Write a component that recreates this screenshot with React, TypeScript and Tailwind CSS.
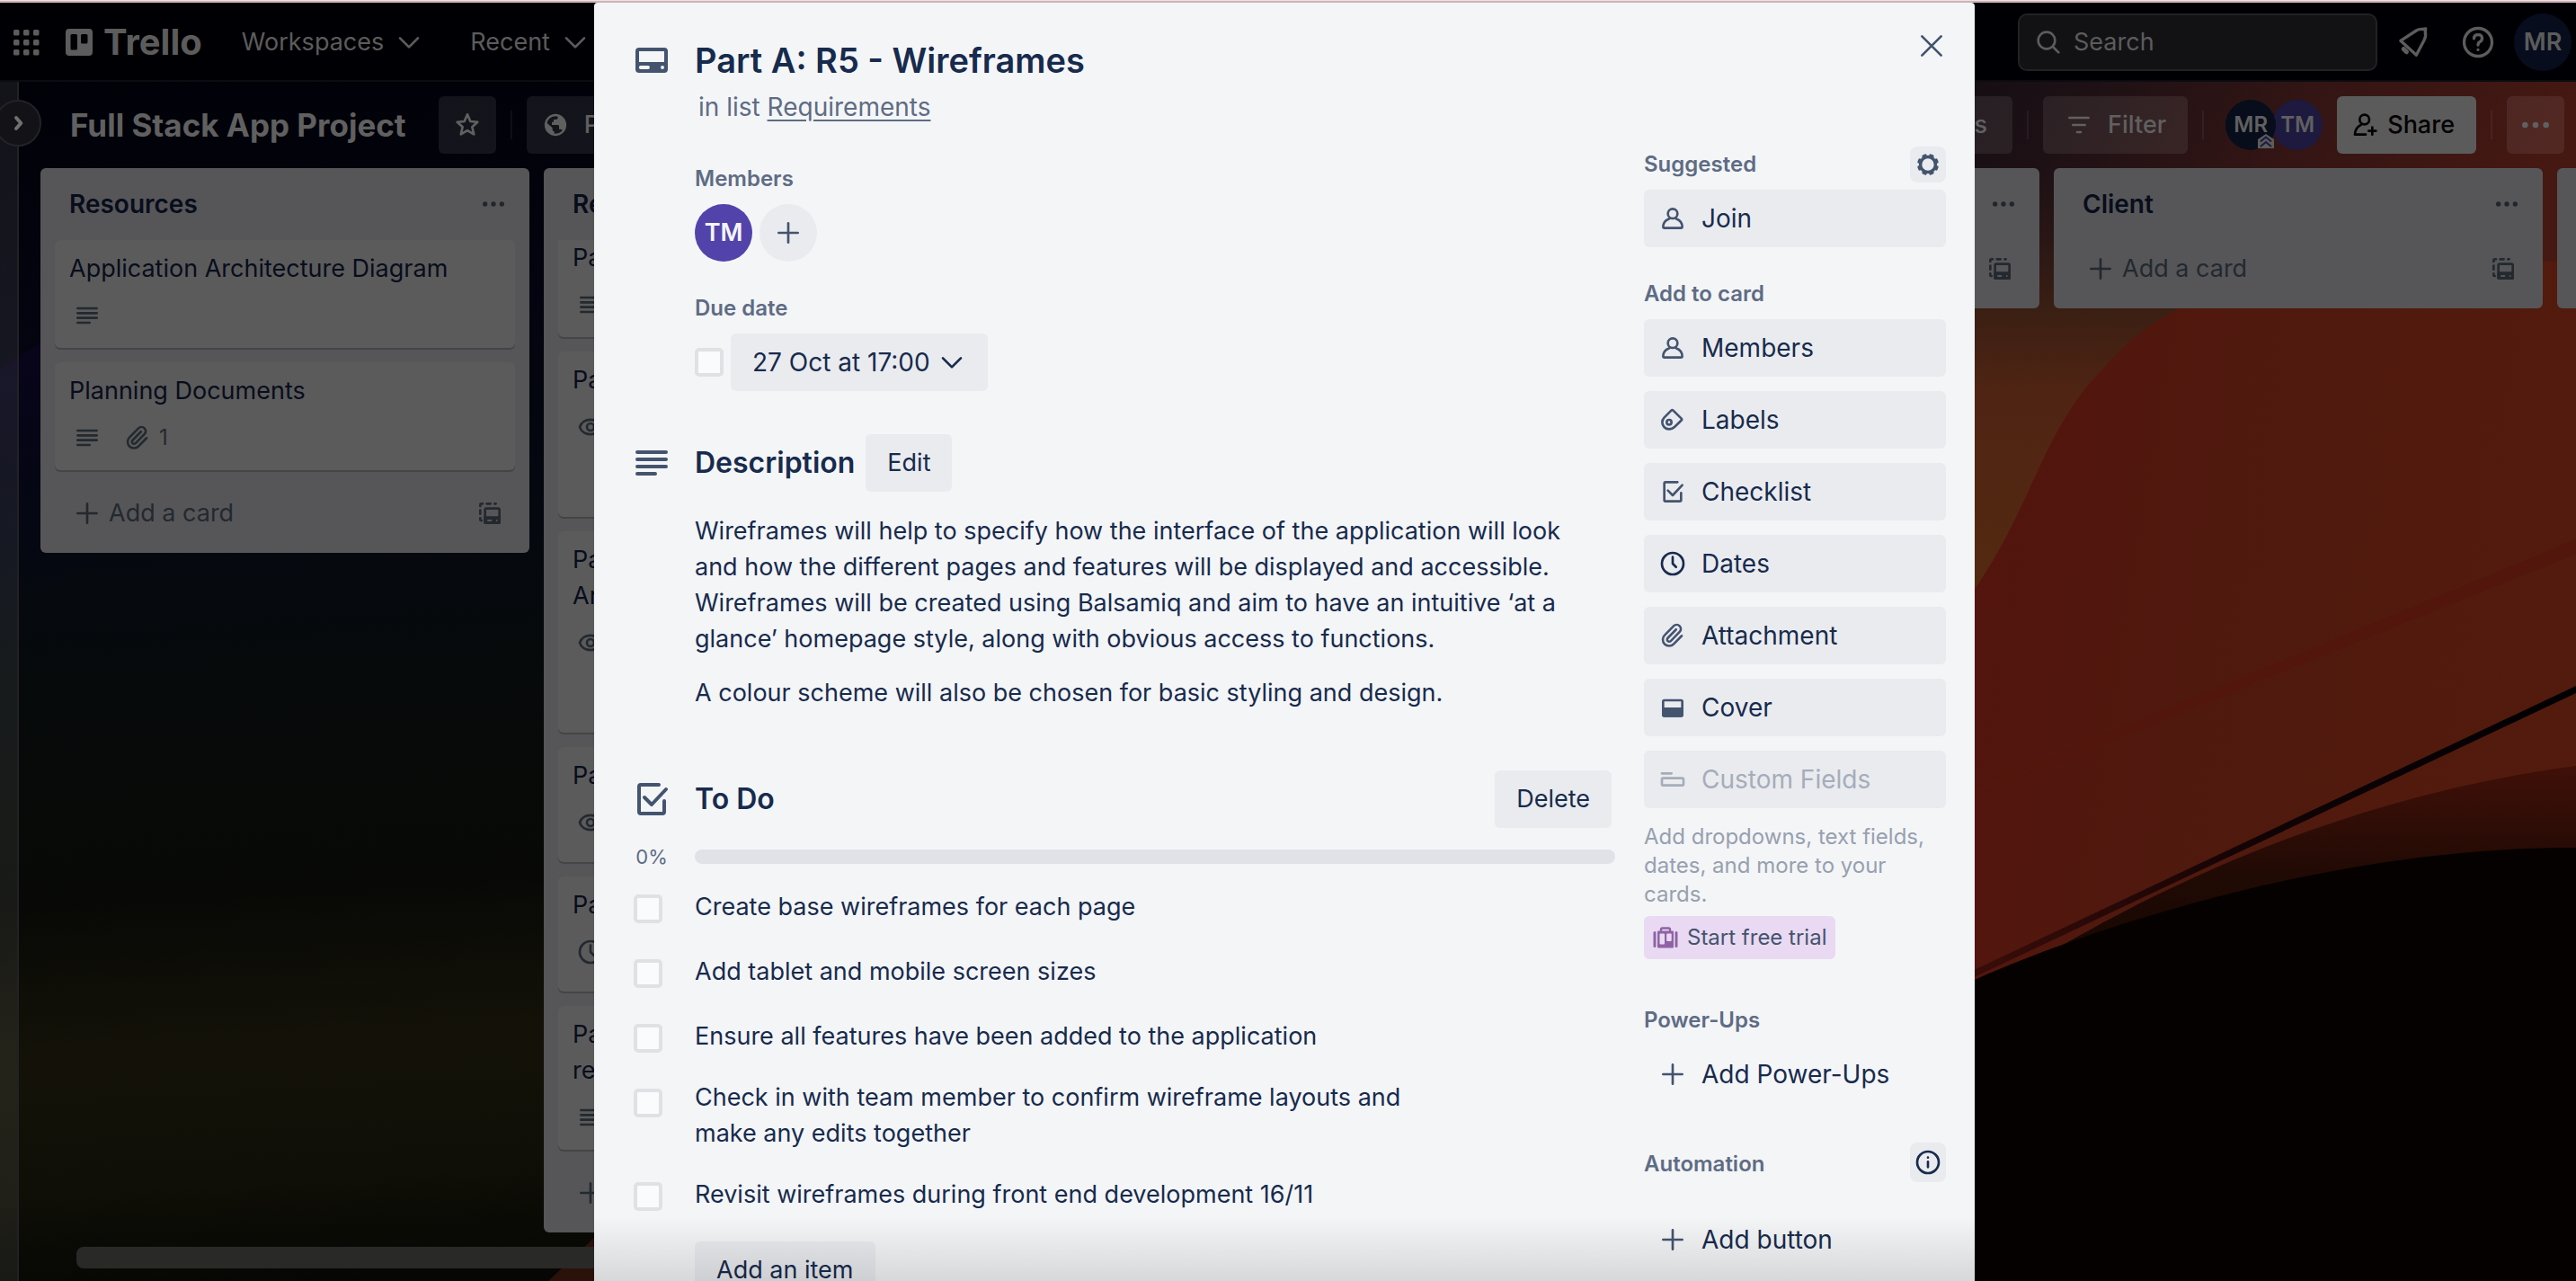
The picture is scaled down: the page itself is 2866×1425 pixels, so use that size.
import { useState } from "react";
import type { ReactNode } from "react";

/* ---------- icons (24-unit grid) ---------- */

function Icon({ className, children, w = 2 }: { className?: string; children: ReactNode; w?: number }) {
  return (
    <svg
      viewBox="0 0 24 24"
      className={className ?? "size-8 shrink-0"}
      fill="none"
      stroke="currentColor"
      strokeWidth={w}
      strokeLinecap="round"
      strokeLinejoin="round"
      aria-hidden="true"
    >
      {children}
    </svg>
  );
}

const CardIcon = () => (
  <Icon className="size-12 shrink-0">
    <rect x="4" y="6" width="16" height="12" rx="1" />
    <path d="M3.5 13H20.5V18Q20.5 18.5 20 18.5H4Q3.5 18.5 3.5 18Z" fill="currentColor" stroke="none" />
    <path d="M5.9 16H10" stroke="#f4f5f7" strokeWidth="1.9" />
    <path d="M18 16h.01" stroke="#f4f5f7" strokeWidth="1.9" />
  </Icon>
);

const LinesIcon = ({ className }: { className?: string }) => (
  <Icon className={className}>
    <path d="M4 6H20M4 10H20M4 14H20M4 18H14" />
  </Icon>
);

const CheckIcon = ({ className }: { className?: string }) => (
  <Icon className={className}>
    <path d="M16 4H6Q5 4 5 5V19Q5 20 6 20H18Q19 20 19 19V13" />
    <path d="M8 11L12 15L20 6.5" />
  </Icon>
);

const MemberIcon = () => (
  <Icon>
    <circle cx="12" cy="8" r="4" />
    <path d="M9 12.3C6 13.3 4 16 4 19.2Q4 20 4.8 20H19.2Q20 20 20 19.2C20 16 18 13.3 15 12.3" />
  </Icon>
);

const LabelIcon = () => (
  <Icon>
    <path d="M5 10L10.8 4.2Q11.6 3.4 12.4 4.2L19.3 11Q20 11.7 19.3 12.4L13.5 18C11 20.4 7.2 20.4 5 18.2C2.7 15.9 2.7 12.4 5 10Z" />
    <circle cx="9" cy="14" r="2" />
  </Icon>
);

const ClockIcon = ({ className }: { className?: string }) => (
  <Icon className={className}>
    <circle cx="12" cy="12" r="9" />
    <path d="M12 6.5V12L14.8 14.8" />
  </Icon>
);

const ClipIcon = () => (
  <Icon>
    <path
      transform="translate(1.2 1.2) scale(.88)"
      strokeWidth="2.2"
      d="m15.5 6.5-7.9 8.1a2 2 0 0 0 2.83 2.83l8.4-8.6a4 4 0 1 0-5.66-5.66l-8.37 8.56a6 6 0 1 0 8.48 8.48l7.6-7.7"
    />
  </Icon>
);

const CoverIcon = () => (
  <Icon>
    <rect x="4" y="6" width="16" height="13" rx="1" />
    <path d="M4 13H20V18Q20 19 19 19H5Q4 19 4 18Z" fill="currentColor" />
  </Icon>
);

const FieldsIcon = () => (
  <Icon>
    <path d="M3 7H11" />
    <rect x="3" y="11" width="18" height="6" rx="1" />
  </Icon>
);

const PlusIcon = () => (
  <Icon>
    <path d="M12 4V20M4 12H20" />
  </Icon>
);

const EyeIcon = () => (
  <Icon>
    <path d="M3 12C5.5 3.8 18.5 3.8 21 12C18.5 20.2 5.5 20.2 3 12Z" />
    <circle cx="12" cy="12" r="3" />
  </Icon>
);

const TemplateIcon = () => (
  <Icon>
    <rect x="8" y="8" width="12" height="12" rx="1" />
    <path d="M8 15.5H20V20H8Z" fill="currentColor" />
    <path d="M10.5 18H13M17.8 18h.01" stroke="#565658" strokeWidth="1.5" />
    <path d="M4 6V5Q4 4 5 4H6M9.5 4H12.5M16 4H17M4 9.5V12.5M4 16V17Q4 18 5 18" />
  </Icon>
);

const Dots = ({ className }: { className?: string }) => (
  <svg viewBox="0 0 24 24" className={className ?? "size-8"} fill="currentColor" aria-hidden="true">
    <circle cx="5" cy="12" r="2" />
    <circle cx="12" cy="12" r="2" />
    <circle cx="19" cy="12" r="2" />
  </svg>
);

const Chevron = () => (
  <Icon>
    <path d="M4.5 8.5L12 16L19.5 8.5" />
  </Icon>
);

const GearIcon = () => (
  <Icon>
    <circle cx="12" cy="12" r="6.3" strokeWidth="2.6" />
    <g fill="currentColor" stroke="none">
      {[22.5, 67.5, 112.5, 157.5, 202.5, 247.5, 292.5, 337.5].map((a) => (
        <rect key={a} x="10" y="3" width="4" height="3.4" rx="1" transform={`rotate(${a} 12 12)`} />
      ))}
    </g>
  </Icon>
);

const SuitcaseIcon = () => (
  <svg viewBox="0 0 28 24" className="h-6 w-7 shrink-0" aria-hidden="true">
    <path d="M9 5V3Q9 1.5 10.500 1.500H17.500Q19 1.500 19 3V5" fill="none" stroke="#8f64a6" strokeWidth="2.400" />
    <rect x="0.500" y="5" width="3" height="18" rx="1.500" fill="#8f64a6" />
    <rect x="24.500" y="5" width="3" height="18" rx="1.500" fill="#8f64a6" />
    <rect x="5" y="4.500" width="18" height="19" rx="1" fill="#8f64a6" />
    <rect x="7.500" y="7.500" width="5.500" height="12" rx="1" fill="#ead9f2" />
    <rect x="15.200" y="7.500" width="5.500" height="8.500" rx="1" fill="#ead9f2" />
  </svg>
);

/* ---------- wallpaper ---------- */

function Wallpaper() {
  return (
    <svg
      viewBox="0 0 2866 1425"
      preserveAspectRatio="none"
      className="absolute inset-0 size-full"
      aria-hidden="true"
    >
      <defs>
        <linearGradient id="left" x1="0" y1="0" x2="0.12" y2="1">
          <stop offset="0" stopColor="#000006" />
          <stop offset="0.25" stopColor="#03040f" />
          <stop offset="0.42" stopColor="#05080f" />
          <stop offset="0.55" stopColor="#070a0a" />
          <stop offset="0.7" stopColor="#080906" />
          <stop offset="0.82" stopColor="#141208" />
          <stop offset="0.92" stopColor="#0f0f07" />
          <stop offset="1" stopColor="#060604" />
        </linearGradient>
        <linearGradient id="purple" x1="0" y1="0" x2="0" y2="1">
          <stop offset="0" stopColor="#0a031c" />
          <stop offset="1" stopColor="#04081a" stopOpacity="0" />
        </linearGradient>
        <linearGradient id="top" x1="0" y1="0" x2="1" y2="0.3">
          <stop offset="0" stopColor="#0c0b12" />
          <stop offset="0.35" stopColor="#1e1115" />
          <stop offset="0.65" stopColor="#331514" />
          <stop offset="1" stopColor="#451812" />
        </linearGradient>
        <linearGradient id="brown" x1="0" y1="0" x2="0" y2="1">
          <stop offset="0" stopColor="#2a1a16" stopOpacity="0" />
          <stop offset="0.3" stopColor="#3a1f13" />
          <stop offset="0.5" stopColor="#502413" />
          <stop offset="1" stopColor="#532a10" />
        </linearGradient>
        <linearGradient id="red" x1="0" y1="0.3" x2="1" y2="0.5">
          <stop offset="0" stopColor="#53140d" />
          <stop offset="0.4" stopColor="#50190e" />
          <stop offset="1" stopColor="#521b0d" />
        </linearGradient>
        <linearGradient id="dune" x1="0" y1="0" x2="0" y2="1">
          <stop offset="0" stopColor="#3f1008" />
          <stop offset="0.6" stopColor="#200a04" />
          <stop offset="1" stopColor="#180703" />
        </linearGradient>
        <linearGradient id="ray" x1="0" y1="0" x2="1" y2="0">
          <stop offset="0" stopColor="#3a0d09" />
          <stop offset="0.5" stopColor="#100305" />
          <stop offset="1" stopColor="#000003" />
        </linearGradient>
      </defs>
      <rect width="2866" height="1425" fill="url(#left)" />
      <path d="M0 410Q30 390 50 380L110 350V620L0 680Z" fill="url(#purple)" />
      <path d="M610 1425L700 1340V1425Z" fill="#2a120a" />
      <rect x="2100" width="766" height="360" fill="url(#top)" />
      <rect x="2190" y="200" width="500" height="480" fill="url(#brown)" />
      <path
        d="M2190 665C2260 570 2270 480 2340 410C2375 370 2400 357 2424 343L2700 300Q2810 290 2866 290V1020L2190 1100Z"
        fill="url(#red)"
      />
      <path d="M2190 880L2866 600V616L2190 888Z" fill="#52160c" />
      <path d="M2280 1060C2450 960 2650 880 2866 852V1000Z" fill="url(#dune)" />
      <path d="M2190 1093C2330 1030 2600 942 2866 943V1425H2190Z" fill="#050100" />
      <path d="M2190 1082L2866 763V771L2190 1090Z" fill="url(#ray)" />
    </svg>
  );
}

/* ---------- board ---------- */

type BoardCard = { title: string; badge: "lines" | "lines-clip" | "eye" | "clock"; tall?: string };

const resources: BoardCard[] = [
  { title: "Application Architecture Diagram", badge: "lines" },
  { title: "Planning Documents", badge: "lines-clip" },
];

const requirements: BoardCard[] = [
  { title: "Part A: R1", badge: "lines", tall: "-mt-3 h-[120px]" },
  { title: "Part A: R2", badge: "eye", tall: "h-[184px]" },
  { title: "Part A: R3 -\nArchitecture", badge: "eye", tall: "h-[224px]" },
  { title: "Part A: R4", badge: "eye", tall: "h-32" },
  { title: "Part A: R5 - Wireframes", badge: "clock", tall: "h-32" },
  { title: "Part A: R6 -\nrequirements", badge: "lines", tall: "h-40" },
];

function CardTile({ card }: { card: BoardCard }) {
  return (
    <li className={"shrink-0 rounded-md bg-[#5b5b5b] px-4 pt-3 shadow-[0_2px_0_#454548] " + (card.tall ?? "h-[120px]")}>
      <a href="#card" className="block whitespace-pre-line">
        {card.title}
      </a>
      <div className="mt-4 flex h-8 items-center gap-4 pl-1 text-2xl text-[#23292f]">
        {card.badge.startsWith("lines") && <LinesIcon />}
        {card.badge === "eye" && <EyeIcon />}
        {card.badge === "clock" && <ClockIcon />}
        {card.badge === "lines-clip" && (
          <span className="flex items-center gap-2 pl-2">
            <ClipIcon />1
          </span>
        )}
      </div>
    </li>
  );
}

function List({ title, cards = [] }: { title: string; cards?: BoardCard[] }) {
  return (
    <section className="flex w-[544px] shrink-0 flex-col rounded-md bg-[#565658] px-4 pb-3 text-[#080d1c]">
      <header className="flex h-20 items-center justify-between pr-2 pl-4">
        <h2 className="text-[28px] font-semibold">{title}</h2>
        <button type="button" aria-label={title + " actions"} className="text-[#20262d]">
          <Dots />
        </button>
      </header>
      {cards.length > 0 && (
        <ul className="mb-[14px] flex flex-col gap-4 overflow-hidden pb-[2px]">
          {cards.map((c) => (
            <CardTile key={c.title} card={c} />
          ))}
        </ul>
      )}
      <div className="flex h-16 items-center justify-between px-3 pl-5 text-[#23292f]">
        <button type="button" className="flex items-center gap-2">
          <PlusIcon />
          Add a card
        </button>
        <button type="button" aria-label="Create from template">
          <TemplateIcon />
        </button>
      </div>
    </section>
  );
}

function Avatar({ name, className }: { name: string; className: string }) {
  return <span className={"flex shrink-0 items-center justify-center rounded-full font-semibold " + className}>{name}</span>;
}

const Divider = () => <span className="mx-4 h-8 w-[2px] bg-white/5" />;

function TopBar() {
  return (
    <header className="relative z-10 flex h-[88px] shrink-0 items-center justify-between border-b-2 border-[#0c0c10] bg-[#000004] pt-[2px] pr-[5px] pl-[13px] text-[#5c5c5c]">
      <nav className="flex items-center">
        <button type="button" aria-label="More from Atlassian">
          <svg viewBox="0 0 32 32" className="size-8" fill="currentColor" aria-hidden="true">
            {[2, 13, 24].map((y) => [2, 13, 24].map((x) => <rect key={x + "-" + y} x={x} y={y} width="6.500" height="6.500" rx="1.500" />))}
          </svg>
        </button>
        <a href="#home" className="ml-7 flex items-center gap-3 text-[40px] font-bold">
          <svg viewBox="0 0 30 30" className="size-[30px]" aria-hidden="true">
            <path
              fill="currentColor"
              fillRule="evenodd"
              d="M4 0H26A4 4 0 0 1 30 4V26A4 4 0 0 1 26 30H4A4 4 0 0 1 0 26V4A4 4 0 0 1 4 0ZM7 6Q5.500 6 5.500 7.500V22Q5.500 23.500 7 23.500H11.500Q13 23.500 13 22V7.500Q13 6 11.500 6ZM18.500 6Q17 6 17 7.500V15Q17 16.500 18.500 16.500H23Q24.500 16.500 24.500 15V7.500Q24.500 6 23 6Z"
            />
          </svg>
          Trello
        </a>
        <button type="button" className="ml-11 flex items-center gap-3">
          Workspaces <Chevron />
        </button>
        <button type="button" className="ml-13 flex items-center gap-3">
          Recent <Chevron />
        </button>
      </nav>
      <div className="flex items-center">
        <label className="flex h-16 w-[400px] items-center gap-3 rounded-[10px] border-2 border-[#222224] bg-[#121214] px-4">
          <Icon>
            <circle cx="10.500" cy="10.500" r="7" />
            <path d="M16 16L20.500 20.500" />
          </Icon>
          <input type="search" aria-label="Search" placeholder="Search" className="w-full bg-transparent outline-none placeholder:text-[#5c5c5c]" />
        </label>
        <button type="button" aria-label="Notifications" className="ml-5">
          <Icon className="size-10" w={2}>
            <path d="M3.500 11L14 4.200Q16 3 18.500 3.300L20.200 3L20 5Q20.600 8 19.300 10.500L14 20.500Z" />
            <path d="M5.500 16.500L7.500 18.500" strokeWidth="3" />
          </Icon>
        </button>
        <button type="button" aria-label="Help" className="ml-8">
          <Icon className="size-10">
            <circle cx="12" cy="12" r="9.300" />
            <path d="M9.300 9.500Q9.300 7 12 7Q14.700 7 14.700 9.400Q14.700 11 13 11.800Q12 12.300 12 13.800M12 17h.01" />
          </Icon>
        </button>
        <Avatar name="MR" className="ml-5 size-16 bg-[#070d1c]" />
      </div>
    </header>
  );
}

function BoardHeader() {
  const button = "flex h-16 items-center rounded-md bg-white/7 font-medium";
  return (
    <div className="flex h-24 shrink-0 items-center justify-between pr-[13px] pl-[57px] text-[#606060]">
      <div className="flex items-center">
        <h1 className="text-[35px] font-bold">Full Stack App Project</h1>
        <button type="button" aria-label="Star board" className={button + " ml-9 w-16 justify-center"}>
          <Icon>
            <path d="M12 3.200L14.500 9L20.500 9.600L16 13.700L17.400 19.800L12 16.600L6.600 19.800L8 13.700L3.500 9.600L9.500 9Z" />
          </Icon>
        </button>
        <Divider />
        <button type="button" className={button + " gap-4 px-4"}>
          <svg viewBox="0 0 24 24" className="size-8" aria-hidden="true">
            <circle cx="12" cy="12" r="8.200" fill="none" stroke="currentColor" strokeWidth="1.800" />
            <path fill="currentColor" d="M4 9.500L9.500 14.500V16Q9.500 17.500 11 17.500V20Q4 19 4 12ZM14 4.500V6Q14 7.500 12 7.500H10.500V9.500H9V12H14Q15 12 15 13V15.500H16.500Q18 15.500 18 17.500Q21 14 20 10Q18.500 5.500 14 4.500Z" />
          </svg>
          Public
        </button>
      </div>
      <div className="flex items-center">
        <button type="button" className={button + " px-7"}>Power-Ups</button>
        <Divider />
        <button type="button" className={button + " gap-4 px-6"}>
          <Icon>
            <path d="M4 6H20M7 12H17M10.500 18H13.500" />
          </Icon>
          Filter
        </button>
        <Divider />
        <div className="relative mr-4 ml-2 flex text-2xl">
          <Avatar name="MR" className="z-10 size-14 bg-[#070d1a]" />
          <Avatar name="TM" className="-ml-1 size-14 bg-[#1d193f]" />
          <svg viewBox="0 0 18 16" className="absolute top-[38px] left-9 z-20 h-4 w-[18px]" aria-hidden="true">
            <path d="M0 6L9 0L18 6V16H0Z" fill="#5c5c5c" />
            <path d="M3 8.500L9 3.500L15 8.500M3 14L9 9L15 14" fill="none" stroke="#1d193f" strokeWidth="2" />
          </svg>
        </div>
        <button type="button" className="flex h-16 items-center gap-2 rounded-md bg-[#5b5b5b] px-4 pr-6 font-medium text-[#020202]">
          <Icon>
            <circle cx="11" cy="7.500" r="4" />
            <path d="M8.500 11.500C5 13.500 3 16 3 20H12M17.500 14V20M14.500 17H20.500" />
          </Icon>
          Share
        </button>
        <Divider />
        <button type="button" aria-label="Board menu" className={button + " w-16 justify-center"}>
          <Dots className="size-10" />
        </button>
      </div>
    </div>
  );
}

/* ---------- card dialog ---------- */

const tasks = [
  "Create base wireframes for each page",
  "Add tablet and mobile screen sizes",
  "Ensure all features have been added to the application",
  "Check in with team member to confirm wireframe layouts and make any edits together",
  "Revisit wireframes during front end development 16/11",
];

const box = "size-8 shrink-0 appearance-none rounded-[5px] border-4 border-[#dfe1e4] bg-[#fafbfc] checked:bg-[#5243aa]";
const grayButton = "flex h-16 items-center rounded-md bg-[#eaebef] px-6";

function SideButton({ icon, children, disabled }: { icon: ReactNode; children: ReactNode; disabled?: boolean }) {
  return (
    <button
      type="button"
      disabled={disabled}
      className="flex h-16 w-full items-center gap-4 rounded-md bg-[#eaebef] px-4 text-[#172b4d] disabled:text-[#a5adba]"
    >
      {icon}
      {children}
    </button>
  );
}

function PlainSideButton({ children }: { children: ReactNode }) {
  return (
    <button type="button" className="flex h-16 w-full items-center gap-4 px-4">
      <span className="text-[#44546f]">
        <PlusIcon />
      </span>
      {children}
    </button>
  );
}

const Slate = ({ children }: { children: ReactNode }) => <span className="text-[#44546f]">{children}</span>;

function SideHeading({ children }: { children: ReactNode }) {
  return <h3 className="text-2xl/8 font-semibold text-[#5e6c84]">{children}</h3>;
}

function Sidebar() {
  return (
    <aside className="w-[336px] shrink-0 text-[28px]">
      <div className="flex h-10 items-center justify-between">
        <SideHeading>Suggested</SideHeading>
        <button type="button" aria-label="Suggestion settings" className="flex size-10 items-center justify-center rounded-lg bg-[#eaebef] text-[#44546f]">
          <GearIcon />
        </button>
      </div>
      <div className="mt-2">
        <SideButton icon={<Slate><MemberIcon /></Slate>}>Join</SideButton>
      </div>

      <div className="mt-9">
        <SideHeading>Add to card</SideHeading>
      </div>
      <div className="mt-3 flex flex-col gap-4">
        <SideButton icon={<Slate><MemberIcon /></Slate>}>Members</SideButton>
        <SideButton icon={<Slate><LabelIcon /></Slate>}>Labels</SideButton>
        <SideButton icon={<Slate><CheckIcon /></Slate>}>Checklist</SideButton>
        <SideButton icon={<ClockIcon />}>Dates</SideButton>
        <SideButton icon={<Slate><ClipIcon /></Slate>}>Attachment</SideButton>
        <SideButton icon={<Slate><CoverIcon /></Slate>}>Cover</SideButton>
        <SideButton icon={<FieldsIcon />} disabled>Custom Fields</SideButton>
      </div>
      <p className="mt-4 text-2xl/8 text-[#97a0af]">Add dropdowns, text fields, dates, and more to your cards.</p>
      <a href="#trial" className="mt-2 flex h-12 w-fit items-center gap-[10px] rounded-md bg-[#ead9f2] px-[10px] text-2xl text-[#44546f]">
        <SuitcaseIcon />
        Start free trial
      </a>

      <div className="mt-13">
        <SideHeading>Power-Ups</SideHeading>
      </div>
      <div className="mt-3">
        <PlainSideButton>Add Power-Ups</PlainSideButton>
      </div>

      <div className="mt-11 flex h-11 items-center justify-between">
        <div className="pt-1">
          <SideHeading>Automation</SideHeading>
        </div>
        <button type="button" aria-label="About automation" className="flex h-11 w-10 items-center justify-center rounded-lg bg-[#eaebef]">
          <Icon>
            <circle cx="12" cy="12" r="9" />
            <path d="M12 11.500V16M12 8h.01" />
          </Icon>
        </button>
      </div>
      <div className="mt-8">
        <PlainSideButton>Add button</PlainSideButton>
      </div>
    </aside>
  );
}

function CardDialog() {
  const [done, setDone] = useState<boolean[]>(tasks.map(() => false));
  const label = "text-2xl/8 font-semibold text-[#5e6c84]";
  return (
    <div className="absolute inset-x-0 top-[3px] bottom-0 z-20 flex justify-center overflow-hidden pr-2">
      <div
        role="dialog"
        aria-labelledby="card-title"
        className="relative h-full w-[1536px] overflow-hidden rounded-t bg-[#f4f5f7] text-[#172b4d]"
      >
        <button type="button" aria-label="Close" className="absolute top-8 right-8 text-[#44546f]">
          <Icon className="size-8">
            <path d="M4 4L20 20M20 4L4 20" />
          </Icon>
        </button>

        <header className="flex gap-6 pt-10 pl-10 text-[#44546f]">
          <CardIcon />
          <div>
            <h2 id="card-title" className="text-[38px]/12 font-semibold text-[#172b4d]">
              Part A: R5 - Wireframes
            </h2>
            <p className="mt-2 pl-1 text-[28px] text-[#5e6c84]">
              in list <a href="#requirements" className="underline underline-offset-4">Requirements</a>
            </p>
          </div>
        </header>

        <div className="flex justify-between pr-8 pl-10">
          <main className="w-[1096px]">
            <div className="pt-11 pl-[72px]">
              <h3 className={label}>Members</h3>
              <div className="mt-3 flex gap-2">
                <Avatar name="TM" className="size-16 bg-[#5243aa] text-[#f4f5f7]" />
                <button type="button" aria-label="Add member" className="flex size-16 items-center justify-center rounded-full bg-[#eaebef] text-[#44546f]">
                  <PlusIcon />
                </button>
              </div>
              <h3 className={label + " mt-9"}>Due date</h3>
              <div className="mt-3 flex items-center gap-2">
                <input type="checkbox" aria-label="Mark due date complete" className={box} />
                <button type="button" className={grayButton + " gap-2 text-[28px]"}>
                  27 Oct at 17:00 <Chevron />
                </button>
              </div>
            </div>

            <section className="pt-12">
              <div className="flex items-center gap-6">
                <span className="text-[#44546f]">
                  <LinesIcon className="size-12" />
                </span>
                <div className="flex items-center gap-3">
                  <h3 className="text-[32px] font-semibold">Description</h3>
                  <button type="button" className={grayButton}>Edit</button>
                </div>
              </div>
              <div className="mt-6 flex flex-col gap-5 pr-10 pl-[72px]">
                <p>
                  Wireframes will help to specify how the interface of the application will look and how the different
                  pages and features will be displayed and accessible. Wireframes will be created using Balsamiq and aim
                  to have an intuitive ‘at a glance’ homepage style, along with obvious access to functions.
                </p>
                <p>A colour scheme will also be chosen for basic styling and design.</p>
              </div>
            </section>

            <section className="pt-[66px]">
              <div className="flex items-center gap-6 pr-1">
                <span className="text-[#44546f]">
                  <CheckIcon className="size-12" />
                </span>
                <h3 className="text-[32px] font-semibold">To Do</h3>
                <button type="button" className={grayButton + " ml-auto"}>Delete</button>
              </div>
              <div className="mt-4 flex items-center gap-6">
                <span className="w-12 text-center text-[22px]/8 text-[#5e6c84]">0%</span>
                <div role="progressbar" aria-label="To Do" aria-valuenow={0} className="h-4 flex-1 rounded-full bg-[#e1e2e8]" />
              </div>
              <ul className="mt-1">
                {tasks.map((t, i) => (
                  <li key={t}>
                    <label className="flex items-start gap-9 py-3 pl-1">
                      <input
                        type="checkbox"
                        className={box + " mt-[10px]"}
                        checked={done[i]}
                        onChange={() => setDone(done.map((d, j) => (j === i ? !d : d)))}
                      />
                      <span className="flex min-h-12 max-w-[820px] items-center">{t}</span>
                    </label>
                  </li>
                ))}
              </ul>
              <div className="mt-4 flex pl-[72px]">
                <button type="button" className={grayButton}>Add an item</button>
              </div>
            </section>
          </main>
          <div className="pt-6">
            <Sidebar />
          </div>
        </div>
        <div className="pointer-events-none absolute inset-x-0 bottom-0 h-18 bg-linear-to-b from-transparent to-black/12" />
      </div>
    </div>
  );
}

export default function App() {
  return (
    <div className="relative flex h-screen flex-col overflow-hidden bg-black font-[Inter,'Liberation_Sans',sans-serif] text-[27px]/10">
      <div className="relative z-10 h-[3px] shrink-0 border-t border-[#f3dfe2] bg-[#cbb4ba]" />
      <TopBar />
      <div className="relative flex min-h-0 flex-1">
        <div className="absolute inset-x-0 -top-[91px] bottom-0">
          <Wallpaper />
        </div>
        <div className="relative z-10 w-[21px] shrink-0 border-r-2 border-[#222226] bg-white/7">
          <button
            type="button"
            aria-label="Expand sidebar"
            className="absolute top-5 -left-[6px] flex size-[52px] items-center justify-center rounded-full border-2 border-[#232327] bg-[#121217] text-[#707070]"
          >
            <Icon w={3}>
              <path d="M10.500 7.500L14.500 12L10.500 16.500" />
            </Icon>
          </button>
        </div>
        <div className="relative flex min-w-0 flex-1 flex-col">
          <BoardHeader />
          <div className="flex flex-1 items-start gap-4 overflow-hidden pl-6">
            <List title="Resources" cards={resources} />
            <List title="Requirements" cards={requirements} />
            <List title="Planning" />
            <List title="Development" />
            <List title="Client" />
            <List title="Deployment" />
          </div>
          <div className="mb-[14px] ml-16 h-6 w-1/2 shrink-0 rounded-lg bg-[#292927]" />
        </div>
      </div>
      <CardDialog />
    </div>
  );
}
